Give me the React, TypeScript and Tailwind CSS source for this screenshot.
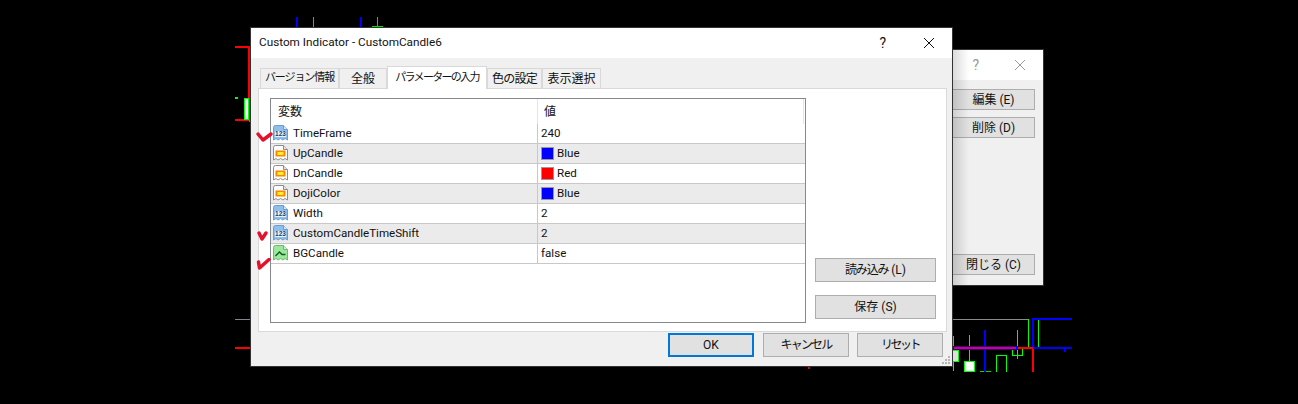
import React from "react";

const FONT = "[font-family:'Roboto','Noto_Sans_CJK_JP',sans-serif]";

function Chart() {
  const r: [number, number, number, number, string][] = [
    [296, 17, 2, 11, "#0000ff"], [290, 27, 12, 1, "#00c800"], [313, 17, 1, 11, "#00e000"], [308, 27, 11, 1, "#00e000"],
    [360, 17, 2, 11, "#0000ff"], [356, 27, 11, 1, "#00c800"], [377, 17, 1, 10, "#00e000"], [372, 26, 11, 2, "#00e000"],
    [235, 46, 15, 2, "#ff0000"], [248, 46, 2, 75, "#ff0000"], [235, 119, 15, 2, "#ff0000"],
    [235, 97, 3, 2, "#00ff00"], [244, 98, 5, 22, "#00ff00"], [245, 99, 3, 20, "#ffffff"], [249, 120, 1, 2, "#00c800"],
    [235, 319, 16, 1, "#7d8790"], [235, 347, 15, 2, "#ff0000"],
    [952, 319, 76, 1, "#8a8a8a"], [808, 366, 2, 3, "#e00000"],
    [953, 336, 1, 35, "#00ff00"], [952, 350, 7, 12, "#00ff00"], [952, 351, 6, 10, "#dedede"],
    [969, 335, 1, 37, "#00ff00"],
    [964, 361, 11, 11, "#00ff00"], [965, 362, 9, 9, "#ffffff"],
    [980, 371, 11, 1, "#00e000"], [984, 330, 2, 42, "#0000ff"],
    [996, 355, 11, 1, "#00ff00"], [996, 355, 1, 17, "#00ff00"], [1006, 355, 1, 17, "#00ff00"],
    [1017, 330, 1, 29, "#00ff00"], [1012, 355, 11, 1, "#00ff00"], [1012, 349, 1, 7, "#00ff00"], [1022, 349, 1, 7, "#00ff00"],
    [1028, 319, 1, 28, "#00ff00"], [1038, 319, 1, 28, "#00ff00"],
    [1032, 318, 2, 30, "#0000ff"], [1032, 318, 40, 2, "#0000ff"],
    [952, 346, 66, 4, "#0000ff"], [954, 347, 62, 2, "#ff0000"], [1018, 347, 15, 2, "#ff0000"],
    [1033, 347, 39, 2, "#0000ff"], [1032, 349, 2, 23, "#ff0000"], [1064, 349, 2, 3, "#0000ff"],
  ];
  return (
    <svg className="absolute left-0 top-0" width="1298" height="404" shapeRendering="crispEdges">
      {r.map(([x, y, w, h, c], i) => <rect key={i} x={x} y={y} width={w} height={h} fill={c} />)}
    </svg>
  );
}

function Icon({ kind }: { kind: "num" | "color" | "bool" }) {
  const fill = kind === "num" ? "#8fbfec" : kind === "color" ? "#fbfbfb" : "#9be89b";
  const stroke = kind === "num" ? "#6d9ccb" : kind === "color" ? "#8c8c8c" : "#6fb96f";
  return (
    <svg width="17" height="18" viewBox="0 0 17 18" className="shrink-0 -mt-[1px]">
      <path d="M1.5 3.5Q1.5 1.5 3.5 1.5H11.5L15.5 5.5V16L13 14.5L11 16L8.5 14.5L6 16L4 14.5L1.5 16Z" fill={fill} stroke={stroke} />
      <path d="M11.5 1.5V5.5H15.5" fill={kind === "color" ? "#e5e5e5" : "#d5e8f8"} stroke={stroke} />
      {kind === "num" && (
        <>
          <rect x="3" y="7" width="11" height="6" fill="#e9f3fb" />
          <text x="8.5" y="12.4" textAnchor="middle" fontSize="6.5" fontWeight="700" fill="#143f70" fontFamily="Liberation Sans">123</text>
        </>
      )}
      {kind === "color" && (
        <>
          <rect x="3.5" y="6.5" width="10" height="6" fill="#f58a00" />
          <rect x="5.5" y="8" width="6" height="3" fill="#ffee30" />
        </>
      )}
      {kind === "bool" && <path d="M3.5 12L7.5 8L10 10.5H13.5" fill="none" stroke="#0d5a24" strokeWidth="1.4" />}
    </svg>
  );
}

const rows: { name: string; kind: "num" | "color" | "bool"; value: string; swatch?: string }[] = [
  { name: "TimeFrame", kind: "num", value: "240" },
  { name: "UpCandle", kind: "color", value: "Blue", swatch: "bg-[#0000ff]" },
  { name: "DnCandle", kind: "color", value: "Red", swatch: "bg-[#ff0000]" },
  { name: "DojiColor", kind: "color", value: "Blue", swatch: "bg-[#0000ff]" },
  { name: "Width", kind: "num", value: "2" },
  { name: "CustomCandleTimeShift", kind: "num", value: "2" },
  { name: "BGCandle", kind: "bool", value: "false" },
];

function Btn({ children, className = "" }: { children: React.ReactNode; className?: string }) {
  return (
    <div className={`flex items-center justify-center bg-[#e1e1e1] border border-[#adadad] text-[12px] leading-none text-[#111] whitespace-nowrap ${className}`}>
      {children}
    </div>
  );
}

function Tab({ label, w, active, type = "text-[12px]" }: { label: string; w: string; active?: boolean; type?: string }) {
  return active ? (
    <div className={`${w} h-[23px] bg-white border border-b-0 border-[#d9d9d9] flex items-center justify-center whitespace-nowrap -mb-px relative z-10 ${type}`}>{label}</div>
  ) : (
    <div className={`${w} h-[20px] bg-[#f0f0f0] border border-b-0 border-[#d9d9d9] flex items-center justify-center whitespace-nowrap ${type}`}>{label}</div>
  );
}

function X({ color }: { color: string }) {
  return (
    <svg width="12" height="12" viewBox="0 0 12 12">
      <path d="M1 1L11 11M11 1L1 11" stroke={color} strokeWidth="1" fill="none" />
    </svg>
  );
}

function Marks() {
  return (
    <svg className="absolute left-0 top-0" width="1298" height="404" fill="none" stroke="#e5102a" strokeWidth="3.5" strokeLinecap="round" strokeLinejoin="round">
      <path d="M258 134L263 140L271 134" />
      <path d="M259 233L262 239L266 233" />
      <path d="M258.5 262L259.5 268L269 259.5" />
    </svg>
  );
}

export default function App() {
  return (
    <div className={`relative w-[1298px] h-[404px] overflow-hidden bg-black text-[#111] ${FONT}`}>
      <Chart />

      {/* back window */}
      <div className="absolute left-[900px] top-[49px] w-[144px] h-[237px] border border-[#333] bg-[#f0f0f0] flex flex-col">
        <div className="h-[30px] bg-white flex items-center justify-end gap-[35px] pr-[17px] text-[14px] text-[#999]">
          <span>?</span>
          <X color="#999" />
        </div>
        <div className="flex-1 flex flex-col items-end pr-[8px] pt-[9px]">
          <Btn className="w-[83px] h-[21px]">編集 (E)</Btn>
          <Btn className="w-[83px] h-[21px] mt-[7px]">削除 (D)</Btn>
          <div className="flex-1" />
          <Btn className="w-[83px] h-[21px] mb-[10px]">閉じる (C)</Btn>
        </div>
        <div className="absolute left-[52px] top-0 bottom-0 w-[16px] bg-gradient-to-r from-[#00000024] to-transparent" />
      </div>

      {/* main window */}
      <div className="absolute left-[250px] top-[27px] w-[703px] h-[340px] border border-[#333] bg-[#f0f0f0] flex flex-col">
        <div className="h-[30px] shrink-0 bg-white flex items-center pl-[8px] pr-[17px] text-[11.75px]">
          <span className="flex-1">Custom Indicator - CustomCandle6</span>
          <span className="text-[14px] mr-[37px]">?</span>
          <X color="#111" />
        </div>
        <div className="flex-1 flex flex-col pl-[7px] pr-[5px] pt-[8px]">
          <div className="flex items-end pl-[2px] h-[22px]">
            <Tab label="バージョン情報" w="w-[79px]" type="text-[11px] tracking-[-1.1px]" />
            <Tab label="全般" w="w-[48px]" />
            <Tab label="パラメーターの入力" w="w-[100px]" active type="text-[11px] tracking-[-1.7px]" />
            <Tab label="色の設定" w="w-[55px]" type="text-[12px] tracking-[-0.7px]" />
            <Tab label="表示選択" w="w-[59px]" />
          </div>
          <div className="h-[244px] bg-white border border-[#d9d9d9] flex pl-[11px] pt-[9px]">
            <div className="w-[536px] h-[225px] border border-[#85898f] flex flex-col">
              <div className="h-[25px] shrink-0 flex text-[12px]">
                <div className="w-[267px] pl-[7px] flex items-center border-r border-[#e5e5e5]">変数</div>
                <div className="flex-1 pl-[6px] flex items-center border-r border-[#e5e5e5] mr-[1px]">値</div>
              </div>
              {rows.map((r, i) => (
                <div key={r.name} className={`h-[20px] shrink-0 flex items-center border-b border-[#c8c8c8] text-[11.6px] ${i % 2 ? "bg-[#ebebeb]" : "bg-white"}`}>
                  <div className="w-[267px] h-full pl-[1px] flex items-center gap-[4px] border-r border-[#c8c8c8]">
                    <Icon kind={r.kind} />
                    <span>{r.name}</span>
                  </div>
                  <div className="flex-1 pl-[3px] flex items-center gap-[3px]">
                    {r.swatch && <span className={`w-[13px] h-[13px] border border-[#999] ${r.swatch}`} />}
                    <span>{r.value}</span>
                  </div>
                </div>
              ))}
            </div>
            <div className="flex flex-col pl-[9px] pt-[160px]">
              <Btn className="w-[121px] h-[24px]"><span className="tracking-[-1.2px]">読み込み</span>&nbsp;(L)</Btn>
              <Btn className="w-[121px] h-[24px] mt-[13px]">保存 (S)</Btn>
            </div>
          </div>
          <div className="flex justify-end gap-[8px] pt-[1px] pr-[4px]">
            <Btn className="w-[86px] h-[24px] mr-[1px] !border-2 !border-[#0078d7]">OK</Btn>
            <Btn className="w-[86px] h-[24px] text-[11px] tracking-[-1.8px]">キャンセル</Btn>
            <Btn className="w-[86px] h-[24px] text-[11px] tracking-[-2.5px]">リセット</Btn>
          </div>
        </div>
        <svg className="absolute right-[1px] bottom-[1px]" width="10" height="10" viewBox="0 0 10 10" fill="#b5b5b5" shapeRendering="crispEdges">
          <rect x="7" y="1" width="2" height="2" /><rect x="4" y="4" width="2" height="2" /><rect x="7" y="4" width="2" height="2" />
          <rect x="1" y="7" width="2" height="2" /><rect x="4" y="7" width="2" height="2" /><rect x="7" y="7" width="2" height="2" />
        </svg>
      </div>

      <Marks />
    </div>
  );
}
